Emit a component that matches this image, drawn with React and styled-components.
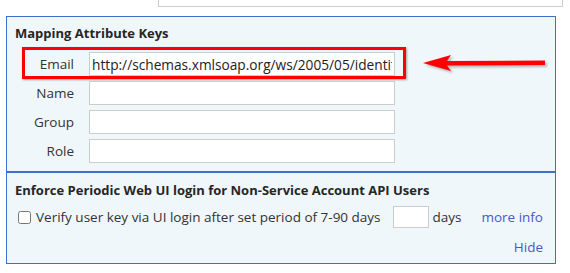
import React from 'react';
import styled, { createGlobalStyle } from 'styled-components';

const GlobalStyle = createGlobalStyle`
  html, body {
    margin: 0;
    padding: 0;
    background: #fff;
    overflow: hidden;
  }
  body {
    font-family: "Open Sans", "Noto Sans", sans-serif;
    font-size: 13px;
    color: #333;
  }
`;

const Page = styled.div`
  width: 570px;
  height: 273px;
  overflow: hidden;
`;

const TopRow = styled.div`
  display: flex;
  align-items: center;
  margin-top: -17px;
  height: 24px;
  padding-left: 13px;
`;

const TopLabel = styled.span`
  color: #333;
`;

const TextInput = styled.input`
  box-sizing: border-box;
  height: ${p => p.$h || 24}px;
  width: ${p => p.$w}px;
  margin: 0;
  padding: 0 2px;
  border: 1px solid #ccc;
  border-radius: 0;
  background: #fff;
  font-family: inherit;
  font-size: 13.7px;
  color: #222;
  outline: none;
`;

const TopInput = styled(TextInput)`
  margin-left: auto;
  margin-right: 7px;
`;

const Panel = styled.div`
  position: relative;
  margin: 9px 0 0 6px;
  width: 550px;
  box-sizing: border-box;
  border: 1px solid #3f6fc8;
  background: #f0f7fb;
`;

const Section = styled.div`
  padding: ${p => p.$pad};
  border-top: ${p => (p.$divided ? '2px solid #3f6fc8' : 'none')};
`;

const Title = styled.div`
  font-weight: 700;
  line-height: 18px;
  color: #262626;
  padding-left: 8px;
`;

const Fields = styled.div`
  display: flex;
  flex-direction: column;
  gap: 5px;
  margin-top: 10px;
`;

const FieldRow = styled.div`
  position: relative;
  display: flex;
  align-items: center;
  width: 388px;

  ${p =>
    p.$highlight &&
    `
    &::after {
      content: '';
      position: absolute;
      left: 15px;
      right: -11px;
      top: -5px;
      bottom: -3px;
      border: 3px solid #f00;
      box-shadow: 1px 1px 2px rgba(0, 0, 0, 0.35);
      pointer-events: none;
    }
  `}
`;

const FieldLabel = styled.label`
  width: 67px;
  text-align: right;
  margin-right: 15px;
  font-size: 13.5px;
  color: #333;
`;

const Arrow = styled.svg`
  position: absolute;
  left: 404px;
  top: 18px;
  overflow: visible;
`;

const OptionRow = styled.div`
  display: flex;
  align-items: center;
  margin-top: 7px;
  padding-left: 7px;
  font-size: 13.5px;
`;

const Check = styled.input`
  width: 13px;
  height: 13px;
  margin: 0 5px 0 4px;
`;

const DaysInput = styled(TextInput)`
  margin: 0 4px 0 12px;
`;

const LinkText = styled.a`
  color: #4d56c6;
  text-decoration: none;
  cursor: pointer;
  font-size: 13.5px;
  margin-left: ${p => (p.$push ? 'auto' : '0')};
`;

const HideRow = styled.div`
  display: flex;
  justify-content: flex-end;
  margin-top: 10px;
  line-height: 18px;
`;

const fields = [
  { name: 'Email', value: 'http://schemas.xmlsoap.org/ws/2005/05/identity/claims/emailaddress', highlight: true },
  { name: 'Name', value: '' },
  { name: 'Group', value: '' },
  { name: 'Role', value: '' },
];

export default function App() {
  return (
    <Page>
      <GlobalStyle />
      <TopRow>
        <TopLabel>Metadata Link</TopLabel>
        <TopInput $w={405} readOnly value="" />
      </TopRow>

      <Panel>
        <Section $pad="7px 0 8px 0">
          <Title>Mapping Attribute Keys</Title>
          <Fields>
            {fields.map(f => (
              <FieldRow key={f.name} $highlight={f.highlight}>
                <FieldLabel>{f.name}</FieldLabel>
                <TextInput $w={306} readOnly value={f.value} />
              </FieldRow>
            ))}
          </Fields>
        </Section>

        <Arrow width="140" height="40" viewBox="411 35 140 40">
          <defs>
            <filter id="sh" x="-10%" y="-50%" width="120%" height="200%">
              <feGaussianBlur stdDeviation="0.8" />
            </filter>
          </defs>
          <path
            d="M423 63 L451 55 L447 61 L545 60.5 L545 65 L447 65.5 L451 71 Z"
            fill="#8a8a8a"
            opacity="0.6"
            transform="translate(2 2)"
            filter="url(#sh)"
          />
          <path d="M423 63 L451 55 L447 61 L545 60.5 L545 65 L447 65.5 L451 71 Z" fill="#f00" />
        </Arrow>

        <Section $divided $pad="8px 12px 7px 0">
          <Title>Enforce Periodic Web UI login for Non-Service Account API Users</Title>
          <OptionRow>
            <Check type="checkbox" />
            <span>Verify user key via UI login after set period of 7-90 days</span>
            <DaysInput $w={36} $h={22} readOnly value="" />
            <span>days</span>
            <LinkText $push>more info</LinkText>
          </OptionRow>
          <HideRow>
            <LinkText>Hide</LinkText>
          </HideRow>
        </Section>
      </Panel>
    </Page>
  );
}
